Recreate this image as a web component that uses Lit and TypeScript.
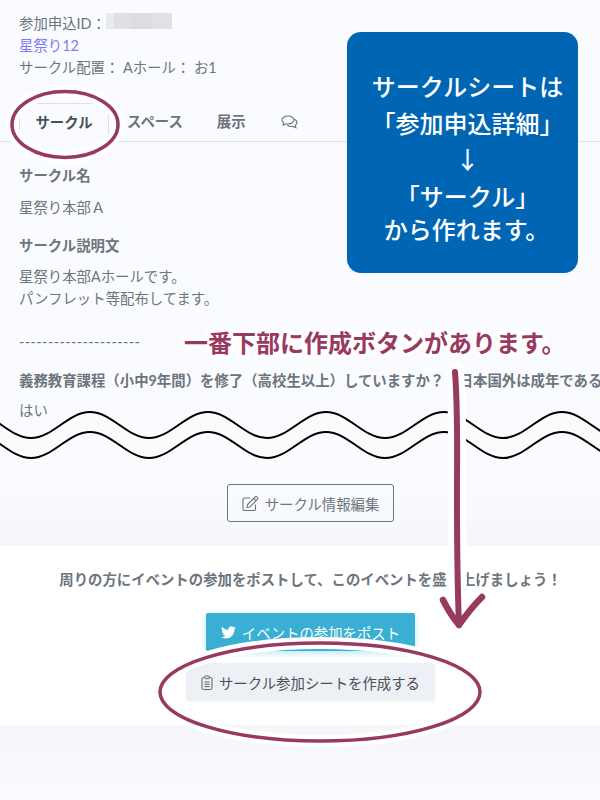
import { LitElement, html, css, svg } from "lit";
import { customElement } from "lit/decorators.js";

function wavePoints(dy: number): string {
  let d = `M -87 ${438 + dy}`;
  let x = -87;
  let up = true;
  while (x < 640) {
    const nx = x + 59;
    const from = up ? 438 + dy : 412 + dy;
    const to = up ? 412 + dy : 438 + dy;
    d += ` C ${x + 22} ${from} ${nx - 22} ${to} ${nx} ${to}`;
    x = nx;
    up = !up;
  }
  return d;
}

function waveBand(dy: number): string {
  const segs: [number, number][] = [];
  let x = -87;
  let up = true;
  while (x < 640) {
    segs.push([x, up ? 438 : 412]);
    x += 59;
    up = !up;
  }
  segs.push([x, up ? 438 : 412]);
  let d = wavePoints(0);
  const last = segs[segs.length - 1];
  d += ` L ${last[0]} ${last[1] + dy}`;
  for (let i = segs.length - 1; i > 0; i--) {
    const [ax, ay] = segs[i];
    const [bx, by] = segs[i - 1];
    d += ` C ${ax - 22} ${ay + dy} ${bx + 22} ${by + dy} ${bx} ${by + dy}`;
  }
  return d + " Z";
}

@customElement("app-root")
export class AppRoot extends LitElement {
  static styles = css`
    :host {
      display: block;
      position: relative;
      width: 600px;
      height: 800px;
      overflow: hidden;
      font-family: "Lato", "Noto Sans CJK JP", sans-serif;
      font-size: 14.4px;
      color: #6c757d;
      background: #fafbff;
    }
    .upper {
      height: 546px;
      box-sizing: border-box;
      padding: 13px 0 0 0;
      overflow: hidden;
      background: linear-gradient(180deg, #fafbff 0, #fafbff 490px, #f5f6fa 546px);
    }
    .meta { padding: 0 19px; line-height: 22px; }
    .meta-id { display: flex; align-items: center; }
    .redact { display: flex; width: 66px; height: 16px; margin: 0 0 6px 0; }
    .redact i { flex: 1; background: #dcdde2; }
    .redact i:first-child { background: #e9eaee; flex: 0.4; }
    .redact i:nth-child(2) { background: #dfe0e5; flex: 0.8; }
    .redact i:nth-child(4) { background: #e0e1e6; }
    .link { color: #7c7cf0; }
    .tabs {
      display: flex;
      align-items: center;
      height: 38px;
      margin-top: 24px;
      border-bottom: 1px solid #dee2e6;
      padding-left: 19px;
    }
    .tab { font-weight: 700; padding: 0 17px; line-height: 38px; color: #6c757d; }
    .tab.active {
      color: #495057;
      width: 90px;
      box-sizing: border-box;
      text-align: center;
      padding: 0;
      border: 1px solid #dee2e6;
      border-bottom-color: #fafbff;
      height: 39px;
      margin-bottom: -1px;
      border-radius: 3px 3px 0 0;
      margin-right: 1px;
      background: #fafbff;
    }
    .chat { display: flex; padding-left: 18px; }
    .body { padding: 0 19px; }
    .h { font-weight: 700; line-height: 22px; white-space: nowrap; }
    .t { line-height: 22px; white-space: nowrap; }
    .h1 { margin-top: 23px; }
    .p1 { margin-top: 10px; }
    .h2 { margin-top: 16px; }
    .p2 { margin-top: 9px; }
    .dash { margin-top: 21px; letter-spacing: 0.43px; }
    .h3 { margin-top: 17px; }
    .p3 { margin-top: 8px; }
    .edit-row { display: flex; justify-content: center; margin-top: 62px; padding-left: 21px; }
    .btn-edit {
      display: flex;
      align-items: center;
      justify-content: center;
      gap: 6px;
      box-sizing: border-box;
      width: 167px;
      height: 38px;
      border: 1px solid #6c757d;
      border-radius: 3px;
      color: #6c757d;
    }
    .white {
      height: 179px;
      background: #fff;
      display: flex;
      flex-direction: column;
      align-items: center;
      box-sizing: border-box;
      padding: 23px 0 0 21px;
    }
    .promo { font-weight: 700; line-height: 22px; white-space: nowrap; }
    .btn-tw {
      display: flex;
      align-items: center;
      justify-content: center;
      gap: 6px;
      width: 209px;
      height: 38px;
      margin-top: 22px;
      background: #38afd3;
      color: #fff;
      border-radius: 2px;
      box-shadow: 0 2px 6px rgba(56, 175, 211, 0.35);
    }
    .btn-sheet {
      display: flex;
      align-items: center;
      justify-content: center;
      gap: 6px;
      width: 249px;
      height: 38px;
      margin-top: 12px;
      background: #edf0f5;
      color: #495057;
      border-radius: 3px;
      box-shadow: 0 1px 4px rgba(0, 0, 0, 0.04);
    }
    .foot { height: 75px; background: linear-gradient(180deg, #f5f6fa, #fafbff); }
    .overlay { position: absolute; inset: 0; width: 600px; height: 800px; }
    .wave-fill { fill: #fbfbfb; }
    .wave-line { fill: none; stroke: #000; stroke-width: 2; }
    .halo { fill: none; stroke: #fff; stroke-linecap: round; }
    .ink { fill: none; stroke: #98395f; stroke-linecap: round; stroke-linejoin: round; }
    .note {
      position: absolute;
      left: 347px;
      top: 32px;
      width: 231px;
      height: 241px;
      box-sizing: border-box;
      padding: 36px 0 0 2px;
      background: #0066b3;
      border-radius: 14px;
      color: #fff;
      font-family: "Noto Sans CJK JP", sans-serif;
      font-weight: 500;
      font-size: 24px;
      line-height: 36.5px;
      text-align: center;
      white-space: nowrap;
    }
    .note div { transform: translateX(4px); }
    .note .last { margin-top: -3px; transform: translateX(3px); }
    .callout {
      position: absolute;
      left: 184px;
      top: 324px;
      font-family: "Noto Sans CJK JP", sans-serif;
      font-weight: 700;
      font-size: 24px;
      line-height: 36px;
      color: #98395f;
      white-space: nowrap;
      -webkit-text-stroke: 7px #fff;
      paint-order: stroke fill;
    }
  `;

  render() {
    const line = "M455 372 C458 410 457 440 457 500 C457 560 458 600 459 625";
    const head = "M443 600 C448 610 454 619 459 625 C466 615 474 605 482 597";
    return html`
      <div class="upper">
        <div class="meta">
          <div class="meta-id">参加申込ID：<span class="redact"><i></i><i></i><i></i><i></i></span></div>
          <div class="link">星祭り12</div>
          <div>サークル配置： Aホール： お1</div>
        </div>
        <div class="tabs">
          <div class="tab active">サークル</div>
          <div class="tab">スペース</div>
          <div class="tab">展示</div>
          <div class="chat">
            <svg width="17" height="15" viewBox="0 0 17 15" fill="none" stroke="#6c757d" stroke-width="1.100">
              <path d="M7 1C3.700 1 1 2.800 1 5c0 1.100.7 2.100 1.700 2.800L2.200 10.200l2.900-1.400c.6.1 1.300.2 1.900.2 3.300 0 6-1.800 6-4s-2.700-4-6-4z" />
              <path d="M13.200 4.300c1.700.6 2.800 1.800 2.800 3.200 0 1.100-.6 2-1.600 2.700l.5 2.500-2.800-1.300c-2.300.4-4.700-.3-5.800-1.600" />
            </svg>
          </div>
        </div>
        <div class="body">
          <div class="h h1">サークル名</div>
          <div class="t p1">星祭り本部Ａ</div>
          <div class="h h2">サークル説明文</div>
          <div class="t p2">星祭り本部Aホールです。</div>
          <div class="t">パンフレット等配布してます。</div>
          <div class="t dash">---------------------</div>
          <div class="h h3">義務教育課程（小中9年間）を修了（高校生以上）していますか？　日本国外は成年であることを確認してください</div>
          <div class="t p3">はい</div>
        </div>
        <div class="edit-row">
          <div class="btn-edit">
            <svg width="17" height="17" viewBox="0 0 17 17" fill="none" stroke="#6c757d" stroke-width="1.100">
              <path d="M13.500 9.500v4.500a1.500 1.500 0 0 1-1.500 1.500H2.500A1.500 1.500 0 0 1 1 14V4.500A1.500 1.500 0 0 1 2.500 3H8" />
              <path d="M5.500 9.500 13 2a1.300 1.300 0 0 1 1.800 0l.6.6a1.300 1.300 0 0 1 0 1.800L7.900 12l-2.900.5z" />
              <path d="M11.700 3.300l2.400 2.400" />
            </svg>
            サークル情報編集
          </div>
        </div>
      </div>
      <div class="white">
        <div class="promo">周りの方にイベントの参加をポストして、このイベントを盛り上げましょう！</div>
        <div class="btn-tw">
          <svg width="15" height="13" viewBox="0 0 24 20" fill="#fff">
            <path d="M24 2.400a9.800 9.800 0 0 1-2.800.8A4.900 4.900 0 0 0 23.300.500a9.800 9.800 0 0 1-3.100 1.200 4.900 4.900 0 0 0-8.400 4.500A14 14 0 0 1 1.700.900a4.900 4.900 0 0 0 1.500 6.600 4.900 4.900 0 0 1-2.200-.6v.1a4.900 4.900 0 0 0 3.900 4.800 4.900 4.900 0 0 1-2.200.1 4.900 4.900 0 0 0 4.600 3.400A9.900 9.900 0 0 1 0 17.300 14 14 0 0 0 7.500 19.500c9.100 0 14-7.500 14-14v-.6A10 10 0 0 0 24 2.400z" />
          </svg>
          イベントの参加をポスト
        </div>
        <div class="btn-sheet">
          <svg width="12" height="15" viewBox="0 0 12 15" fill="none" stroke="#495057" stroke-width="0.900">
            <rect x="1" y="2.500" width="10" height="12" rx="1.500" />
            <rect x="3.700" y="1" width="4.600" height="2.600" rx=".7" fill="#edf0f5" />
            <path d="M3.500 7h5M3.500 9.300h5M3.500 11.600h5" />
          </svg>
          サークル参加シートを作成する
        </div>
      </div>
      <div class="foot"></div>
      <svg class="overlay" viewBox="0 0 600 800">
        ${svg`
          <path class="wave-fill" d=${waveBand(20)} />
          <path class="wave-line" d=${wavePoints(0)} />
          <path class="wave-line" d=${wavePoints(20)} />
          <path class="halo" d=${line} stroke-width="18" />
          <path class="halo" d=${head} stroke-width="16" />
          <ellipse class="halo" cx="65" cy="124.500" rx="53" ry="33" stroke-width="12" />
          <ellipse class="ink" cx="65" cy="124.500" rx="53" ry="33" stroke-width="3.500" />
          <ellipse class="halo" cx="320" cy="692" rx="160" ry="49" stroke-width="12" />
          <ellipse class="ink" cx="320" cy="692" rx="160" ry="49" stroke-width="3.500" />
          <path class="ink" d=${line} stroke-width="6" />
          <path class="ink" d=${head} stroke-width="6.500" />
        `}
      </svg>
      <div class="note">
        <div>サークルシートは</div>
        <div>「参加申込詳細」</div>
        <div>↓</div>
        <div>「サークル」</div>
        <div class="last">から作れます。</div>
      </div>
      <div class="callout">一番下部に作成ボタンがあります。</div>
    `;
  }
}
